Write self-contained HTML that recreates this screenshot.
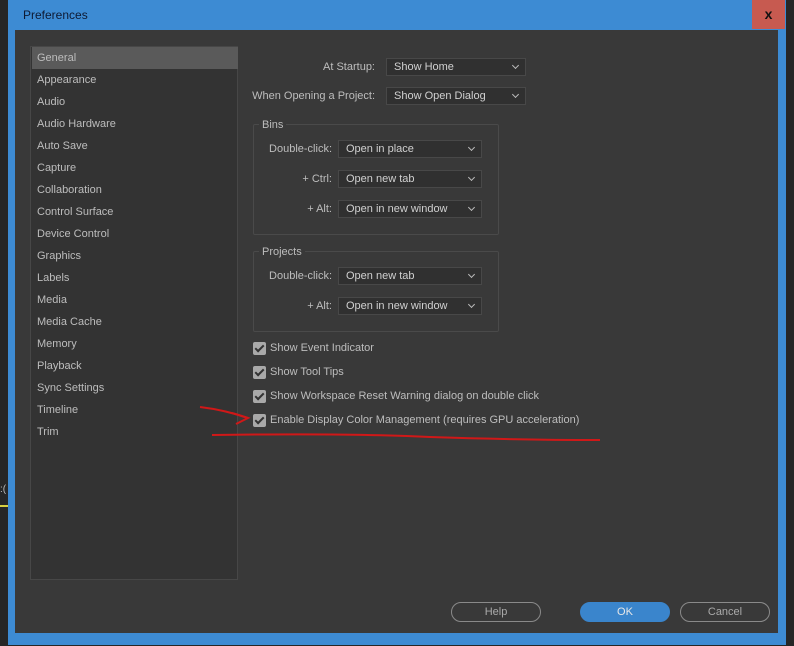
<!DOCTYPE html><html><head><style>
body{margin:0;width:794px;height:646px;background:#262626;position:relative;overflow:hidden;font-family:"Liberation Sans",sans-serif;font-size:11px;line-height:17px;color:#bdbdbd}
.a{position:absolute}
.frame{left:8px;top:0;width:778px;height:645px;background:#3d8bd3}
.content{left:15px;top:30px;width:763px;height:603px;background:#393939}
.title{left:23px;top:8px;color:#0e1a33;font-size:12px;line-height:14px}
.close{left:752px;top:0;width:33px;height:29px;background:#c75a50;color:#111;font-weight:bold;font-size:14px;text-align:center;line-height:29px}
.list{left:30px;top:46px;width:208px;height:534px;background:#333;border:1px solid #474747;box-sizing:border-box}
.li{position:absolute;left:6px;height:22px;line-height:22px;width:200px}
.sel{background:#5a5a5a;left:1px;padding-left:5px;width:201px}
.lbl{text-align:right}
.dd{position:absolute;height:18px;background:#303030;border:1px solid #484848;box-sizing:border-box;line-height:16px;padding-left:7px;color:#d0d0d0}
.dd:after{content:"";position:absolute;right:7px;top:4px;width:4px;height:4px;border-right:1px solid #bbb;border-bottom:1px solid #bbb;transform:rotate(45deg)}
.grp{position:absolute;border:1px solid #4a4a4a;border-radius:2px}
.gl{position:absolute;background:#393939;padding:0 3px}
.cb{position:absolute;left:253px;width:13px;height:13px;background:#a9a9a9;border-radius:2px}
.cb:after{content:"";position:absolute;left:4px;top:1px;width:3px;height:7px;border-right:2px solid #333;border-bottom:2px solid #333;transform:rotate(45deg)}
.ct{position:absolute;left:270px}
.btn{position:absolute;top:602px;width:88px;height:18px;border:1px solid #8a8a8a;border-radius:10px;text-align:center;line-height:18px;color:#aaa}
</style></head><body>
<div class="a" style="left:0;top:505px;width:8px;height:2px;background:#d8d040"></div>
<div class="a" style="left:0;top:481px;font-size:10px;color:#bbb">:(</div>
<div class="a frame"></div>
<div class="a content"></div>
<div class="a title">Preferences</div>
<div class="a close">x</div>
<div class="a list">
<div class="li sel" style="top:0">General</div>
<div class="li" style="top:22px">Appearance</div>
<div class="li" style="top:44px">Audio</div>
<div class="li" style="top:66px">Audio Hardware</div>
<div class="li" style="top:88px">Auto Save</div>
<div class="li" style="top:110px">Capture</div>
<div class="li" style="top:132px">Collaboration</div>
<div class="li" style="top:154px">Control Surface</div>
<div class="li" style="top:176px">Device Control</div>
<div class="li" style="top:198px">Graphics</div>
<div class="li" style="top:220px">Labels</div>
<div class="li" style="top:242px">Media</div>
<div class="li" style="top:264px">Media Cache</div>
<div class="li" style="top:286px">Memory</div>
<div class="li" style="top:308px">Playback</div>
<div class="li" style="top:330px">Sync Settings</div>
<div class="li" style="top:352px">Timeline</div>
<div class="li" style="top:374px">Trim</div>
</div>
<div class="a lbl" style="left:240px;width:135px;top:59px">At Startup:</div>
<div class="dd" style="left:386px;top:58px;width:140px">Show Home</div>
<div class="a lbl" style="left:240px;width:135px;top:88px">When Opening a Project:</div>
<div class="dd" style="left:386px;top:87px;width:140px">Show Open Dialog</div>

<div class="grp" style="left:253px;top:124px;width:244px;height:109px"></div>
<div class="gl" style="left:259px;top:117px">Bins</div>
<div class="a lbl" style="left:240px;width:92px;top:141px">Double-click:</div>
<div class="dd" style="left:338px;top:140px;width:144px">Open in place</div>
<div class="a lbl" style="left:240px;width:92px;top:171px">+ Ctrl:</div>
<div class="dd" style="left:338px;top:170px;width:144px">Open new tab</div>
<div class="a lbl" style="left:240px;width:92px;top:201px">+ Alt:</div>
<div class="dd" style="left:338px;top:200px;width:144px">Open in new window</div>

<div class="grp" style="left:253px;top:251px;width:244px;height:79px"></div>
<div class="gl" style="left:259px;top:244px">Projects</div>
<div class="a lbl" style="left:240px;width:92px;top:268px">Double-click:</div>
<div class="dd" style="left:338px;top:267px;width:144px">Open new tab</div>
<div class="a lbl" style="left:240px;width:92px;top:298px">+ Alt:</div>
<div class="dd" style="left:338px;top:297px;width:144px">Open in new window</div>

<div class="cb" style="top:342px"></div><div class="ct" style="top:340px">Show Event Indicator</div>
<div class="cb" style="top:366px"></div><div class="ct" style="top:364px">Show Tool Tips</div>
<div class="cb" style="top:390px"></div><div class="ct" style="top:388px">Show Workspace Reset Warning dialog on double click</div>
<div class="cb" style="top:414px"></div><div class="ct" style="top:412px">Enable Display Color Management (requires GPU acceleration)</div>

<svg class="a" style="left:0;top:0" width="794" height="646"><g fill="none" stroke="#d01818" stroke-width="2">
<path d="M200 407 Q225 410 248 418"/><path d="M232 413 L248 418 L236 424"/>
<path d="M212 435 Q350 433 430 437 Q520 440 600 440"/></g></svg>

<div class="btn" style="left:451px">Help</div>
<div class="btn" style="left:580px;background:#3a85cc;border-color:#3a85cc;color:#e8e8e8">OK</div>
<div class="btn" style="left:680px">Cancel</div>
</body></html>
